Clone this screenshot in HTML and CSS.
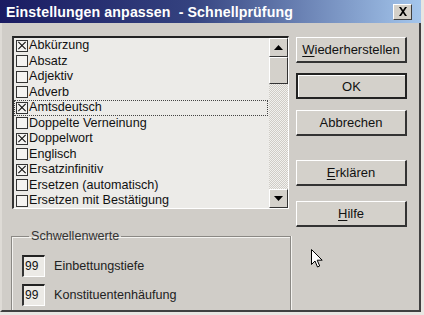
FILE: index.html
```html
<!DOCTYPE html>
<html lang="de">
<head>
<meta charset="utf-8">
<link rel="stylesheet" href="styles.css">
</head>
<body>
<div class="window">
  <div class="titlebar">
    <span class="title">Einstellungen anpassen &nbsp;- Schnellprüfung</span>
    <span class="close"><svg width="10" height="9" viewBox="0 0 10 9"><path d="M1 0h2l2 3 2-3h2L6 4.5 9 9H7L5 6 3 9H1l3-4.5z" fill="#000"/></svg></span>
  </div>
  <div class="content">
    <div class="leftcol">
      <div class="listbox">
        <div class="items">
          <div class="item"><span class="cb checked"><svg width="11" height="11" viewBox="0 0 11 11"><path d="M1.5 1.5l8 8M9.5 1.5l-8 8" stroke="#111" stroke-width="1.2"/></svg></span>Abkürzung</div>
          <div class="item"><span class="cb"></span>Absatz</div>
          <div class="item"><span class="cb"></span>Adjektiv</div>
          <div class="item"><span class="cb"></span>Adverb</div>
          <div class="item focus"><span class="cb checked"><svg width="11" height="11" viewBox="0 0 11 11"><path d="M1.5 1.5l8 8M9.5 1.5l-8 8" stroke="#111" stroke-width="1.2"/></svg></span>Amtsdeutsch</div>
          <div class="item"><span class="cb"></span>Doppelte Verneinung</div>
          <div class="item"><span class="cb checked"><svg width="11" height="11" viewBox="0 0 11 11"><path d="M1.5 1.5l8 8M9.5 1.5l-8 8" stroke="#111" stroke-width="1.2"/></svg></span>Doppelwort</div>
          <div class="item"><span class="cb"></span>Englisch</div>
          <div class="item"><span class="cb checked"><svg width="11" height="11" viewBox="0 0 11 11"><path d="M1.5 1.5l8 8M9.5 1.5l-8 8" stroke="#111" stroke-width="1.2"/></svg></span>Ersatzinfinitiv</div>
          <div class="item"><span class="cb"></span>Ersetzen (automatisch)</div>
          <div class="item"><span class="cb"></span>Ersetzen mit Bestätigung</div>
        </div>
        <div class="scrollbar">
          <div class="sbtn"><svg width="9" height="5" viewBox="0 0 9 5"><path d="M0 5L4.5 0 9 5z" fill="#000"/></svg></div>
          <div class="thumb"></div>
          <div class="track"></div>
          <div class="sbtn"><svg width="9" height="5" viewBox="0 0 9 5"><path d="M0 0L4.5 5 9 0z" fill="#000"/></svg></div>
        </div>
      </div>
      <fieldset class="group">
        <legend>Schwellenwerte</legend>
        <div class="row"><span class="field">99</span><span class="lbl">Einbettungstiefe</span></div>
        <div class="row"><span class="field">99</span><span class="lbl">Konstituentenhäufung</span></div>
      </fieldset>
    </div>
    <div class="buttons">
      <div class="btn b1"><u>W</u>iederherstellen</div>
      <div class="btn b2 default">OK</div>
      <div class="btn b3">Abbrechen</div>
      <div class="btn b4"><u>E</u>rklären</div>
      <div class="btn b5"><u>H</u>ilfe</div>
    </div>
  </div>
  <svg class="cursor" width="12" height="19" viewBox="0 0 12 19"><path d="M0.5 0.5v15l3.5-3.5 2.5 6 2.2-1-2.5-5.8h5z" fill="#fff" stroke="#000" stroke-width="1"/></svg>
</div>
</body>
</html>
```

FILE: styles.css
```css
* { box-sizing: border-box; }
html, body { margin: 0; padding: 0; background: #e8e6e2; }
body {
  font-family: "Liberation Sans", Arial, sans-serif;
  font-size: 13px;
  color: #111;
  width: 424px;
  height: 315px;
  overflow: hidden;
}
.window {
  position: relative;
  width: 421px;
  height: 312px;
  background: #d0cdc8;
  border-left: 2px solid #dedbd6;
  border-right: 2px solid #404040;
  border-bottom: 2px solid #404040;
  display: flex;
  flex-direction: column;
}
.titlebar {
  flex: none;
  height: 23px;
  margin-left: -2px;
  margin-right: -2px;
  background: linear-gradient(to right, #1a1b62 0%, #34427f 45%, #a4c6ec 100%);
  display: flex;
  align-items: center;
  justify-content: space-between;
  padding: 0 6px 0 6px;
}
.title {
  color: #fff;
  font-weight: bold;
  font-size: 14.2px;
  letter-spacing: 0.1px;
  white-space: nowrap;
}
.close {
  width: 19px;
  height: 16px;
  background: #d4d0c8;
  border-top: 1px solid #fff;
  border-left: 1px solid #fff;
  border-right: 1px solid #404040;
  border-bottom: 1px solid #404040;
  display: flex;
  align-items: center;
  justify-content: center;
  margin-right: 3px;
}
.content {
  flex: 1;
  display: flex;
  padding: 13px 0 0 8px;
  min-height: 0;
}
.leftcol {
  width: 281px;
  display: flex;
  flex-direction: column;
}
.listbox {
  flex: none;
  width: 277px;
  height: 173px;
  margin-left: 2px;
  background: #ecebe8;
  border-top: 2px solid #222;
  border-left: 2px solid #333;
  border-right: 1px solid #fff;
  border-bottom: 1px solid #fff;
  display: flex;
  overflow: hidden;
}
.items {
  flex: 1;
  display: flex;
  flex-direction: column;
  overflow: hidden;
}
.item {
  flex: none;
  height: 15.5px;
  line-height: 15.5px;
  font-size: 12.6px;
  display: flex;
  align-items: center;
  white-space: nowrap;
  padding-left: 1px;
  border: 1px dotted transparent;
}
.item.focus {
  border: 1px dotted #444;
  margin-right: 1px;
}
.cb {
  width: 12px;
  height: 12px;
  border: 1px solid #333;
  background: #f4f3f1;
  margin-right: 1px;
  display: inline-flex;
  align-items: center;
  justify-content: center;
  flex: none;
}
.cb svg { display: block; }
.scrollbar {
  width: 19px;
  display: flex;
  flex-direction: column;
  background: repeating-conic-gradient(#f2f1ee 0 25%, #cfccc6 0 50%) 0 0 / 2px 2px;
}
.sbtn, .thumb {
  background: #d4d1cb;
  border-top: 1px solid #fff;
  border-left: 1px solid #fff;
  border-right: 1px solid #333;
  border-bottom: 1px solid #333;
}
.sbtn {
  flex: none;
  height: 19px;
  display: flex;
  align-items: center;
  justify-content: center;
}
.thumb { flex: none; height: 27px; }
.track { flex: 1; }
.group {
  margin: 20px 0 0 1px;
  width: 280px;
  flex: 1;
  border: none;
  border-top: 1px solid #8a8884;
  border-left: 1px solid #8a8884;
  border-right: 1px solid #8a8884;
  box-shadow: inset 1px 1px 0 #f4f3f0, 1px 0 0 #f4f3f0;
  padding: 8px 0 0 10px;
  min-height: 0;
}
.group legend {
  padding: 0 2px;
  margin-left: 7px;
  font-size: 12.6px;
  color: #333;
}
.row {
  display: flex;
  align-items: center;
  height: 29px;
}
.field {
  width: 23px;
  height: 22px;
  background: #eceae6;
  border-top: 2px solid #222;
  border-left: 2px solid #333;
  border-right: 1px solid #fff;
  border-bottom: 1px solid #fff;
  font-size: 12px;
  padding: 2px 0 0 1px;
  line-height: 15px;
}
.lbl {
  margin-left: 9px;
  font-size: 12.6px;
  color: #222;
}
.buttons {
  display: flex;
  flex-direction: column;
  padding-top: 1px;
  margin-left: 5px;
}
.btn {
  flex: none;
  width: 111px;
  height: 26px;
  background: #d4d1cb;
  border-top: 1px solid #fff;
  border-left: 1px solid #fff;
  border-right: 2px solid #333;
  border-bottom: 2px solid #333;
  display: flex;
  align-items: center;
  justify-content: center;
  font-size: 13px;
}
.b2 { margin-top: 10px; }
.b3 { margin-top: 11px; }
.b4 { margin-top: 24px; }
.b5 { margin-top: 15px; }
.btn.default {
  border: 2px solid #222;
  box-shadow: inset 1px 1px 0 #fff;
}
.btn u { text-decoration-thickness: 1px; text-underline-offset: 2px; }
.cursor {
  position: absolute;
  left: 309px;
  top: 249px;
}
```
